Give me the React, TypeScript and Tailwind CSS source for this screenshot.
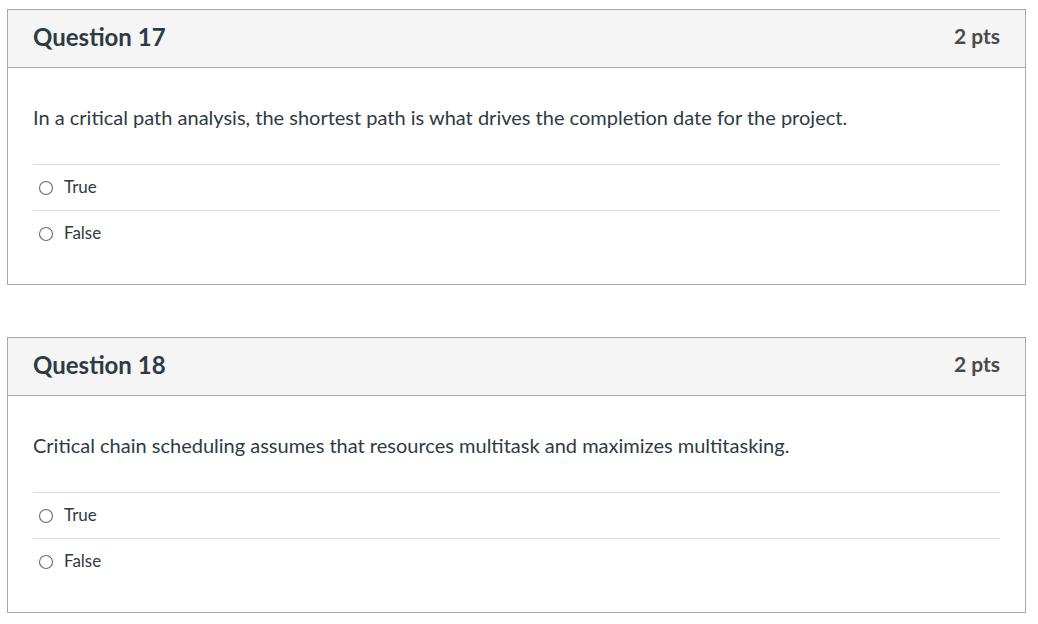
import React from "react";

function Radio() {
  return (
    <svg width="16" height="16" viewBox="0 0 16 16" className="shrink-0">
      <circle cx="8" cy="8" r="6.5" fill="white" stroke="#6b6b6b" strokeWidth="1.1" />
    </svg>
  );
}

function Question({ n, text }: { n: number; text: string }) {
  return (
    <div className="border border-[#a8a8a8] bg-white">
      <div className="flex h-[58px] items-center justify-between border-b border-[#a8a8a8] bg-[#f5f5f5] pb-[4px] pl-[25px] pr-[25px]">
        <div className="text-[24px] font-bold text-[#2d3b45]">Question {n}</div>
        <div className="-translate-y-[1px] text-[21px] font-bold text-[#4a4a4a]">2 pts</div>
      </div>
      <div className="px-[25px] pb-[27px] pt-[34px]">
        <div className="text-[20px] leading-[30px] text-[#2d3b45]">{text}</div>
        <div className="mt-[32px] border-t border-[#dcdcdc]">
          {["True", "False"].map((a, i) => (
            <div
              key={a}
              className={
                "flex h-[46px] items-center gap-[10px] pl-[5px] text-[17px] text-[#2d3b45]" +
                (i === 0 ? " border-b border-[#dcdcdc]" : "")
              }
            >
              <Radio />
              <span className="-translate-y-[1px]">{a}</span>
            </div>
          ))}
        </div>
      </div>
    </div>
  );
}

export default function App() {
  return (
    <div className="min-h-[624px] bg-white pl-[7px] pr-[12px] pt-[9px]" style={{ fontFamily: "Lato, 'Liberation Sans', sans-serif" }}>
      <div className="flex flex-col gap-[52px]">
        <Question n={17} text="In a critical path analysis, the shortest path is what drives the completion date for the project." />
        <Question n={18} text="Critical chain scheduling assumes that resources multitask and maximizes multitasking." />
      </div>
    </div>
  );
}
